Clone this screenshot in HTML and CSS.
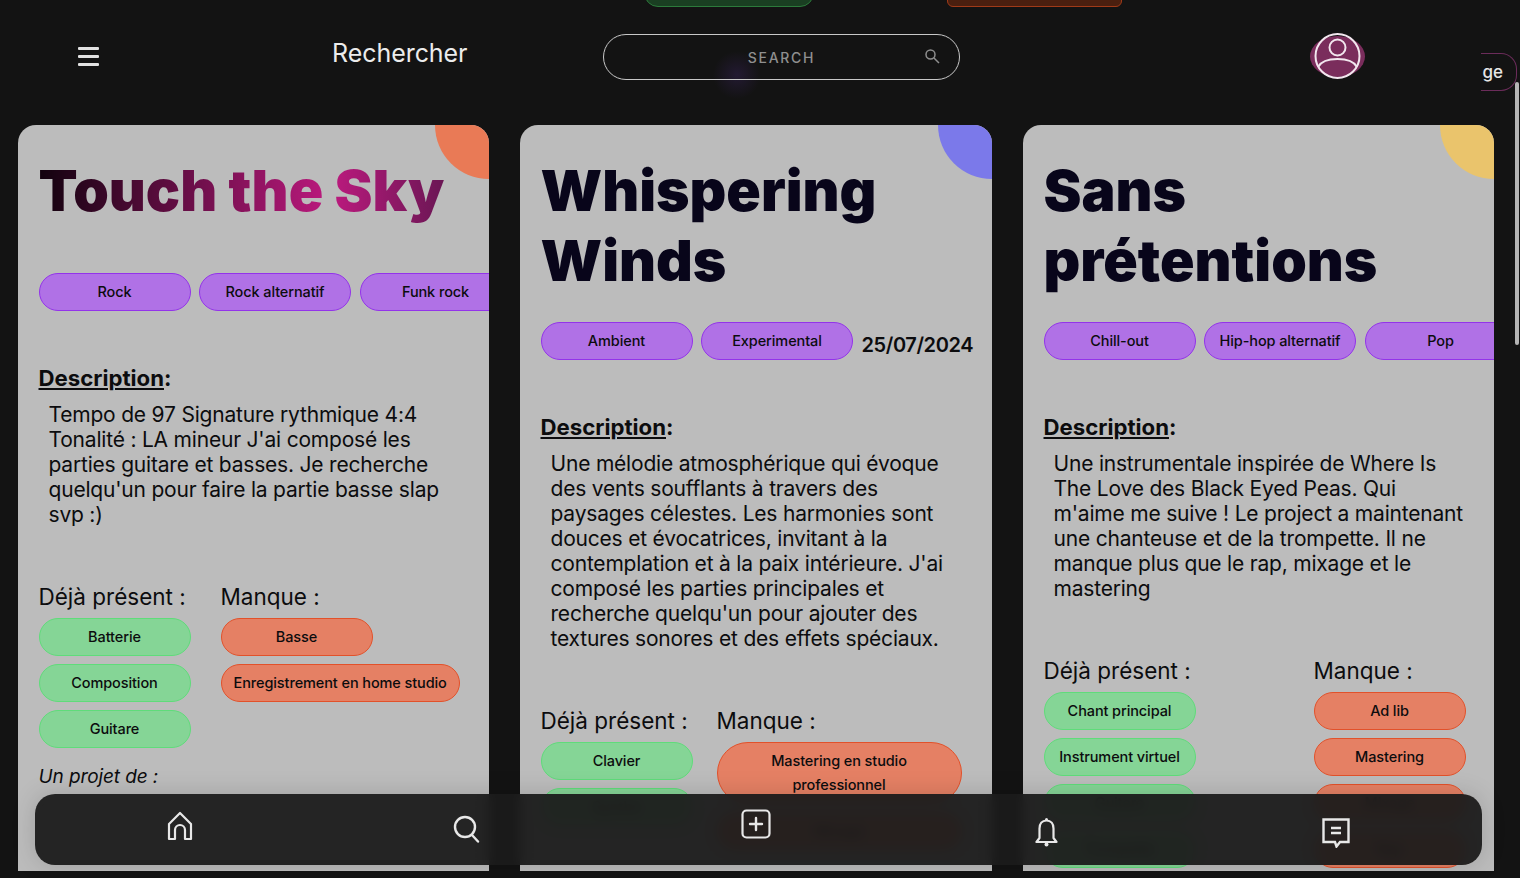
FILE: index.html
```html
<!DOCTYPE html>
<html lang="fr">
<head>
    <meta charset="UTF-8" />
    <title>Rechercher</title>
    <link rel="stylesheet" href="styles.css">
</head>
<body>
    <div class="ghost-top">
        <span class="ghost-pill green"></span>
        <span class="ghost-pill red"></span>
    </div>

    <header class="topbar">
        <div class="burger"><span></span><span></span><span></span></div>
        <div class="page-title">Rechercher</div>
        <div class="search">
            <span class="search-text">SEARCH</span>
            <svg class="search-icon" viewBox="0 0 16 16" width="16" height="16" fill="none" stroke="#8f8f8f" stroke-width="1.5">
                <circle cx="6.5" cy="6.5" r="4.5" />
                <path d="M10 10l5 5" />
            </svg>
        </div>
        <svg class="avatar" viewBox="0 0 56 46" width="56" height="46" fill="none" stroke="#f2e6ee" stroke-width="2">
            <ellipse cx="27.500" cy="23.500" rx="27.500" ry="20.500" fill="#7a2d5c" stroke="none" />
            <circle cx="27.500" cy="23" r="22" />
            <circle cx="27.500" cy="14.500" r="8" />
            <path d="M8 34c3-5.500 10.500-8 19.500-8s16.500 2.500 19.500 8" />
        </svg>
        <div class="badge-edge">ge</div>
    </header>

    <main class="cards">
        <article class="card orange">
            <h2 class="title gradient">Touch the Sky</h2>
            <div class="tags">
                <span class="tag">Rock</span>
                <span class="tag">Rock alternatif</span>
                <span class="tag">Funk rock</span>
            </div>
            <h3 class="desc-head"><u>Description</u>:</h3>
            <p class="desc">Tempo de 97 Signature rythmique 4:4 Tonalité : LA mineur J'ai composé les parties guitare et basses. Je recherche quelqu'un pour faire la partie basse slap svp :)</p>
            <div class="roles">
                <div class="col">
                    <h4>Déjà présent :</h4>
                    <span class="tag ok">Batterie</span>
                    <span class="tag ok">Composition</span>
                    <span class="tag ok">Guitare</span>
                </div>
                <div class="col">
                    <h4>Manque :</h4>
                    <span class="tag miss">Basse</span>
                    <span class="tag miss auto">Enregistrement en home studio</span>
                </div>
            </div>
            <p class="author">Un projet de :</p>
        </article>

        <article class="card violet">
            <h2 class="title">Whispering Winds</h2>
            <div class="tags">
                <span class="tag">Ambient</span>
                <span class="tag">Experimental</span>
                <span class="date">25/07/2024</span>
            </div>
            <h3 class="desc-head"><u>Description</u>:</h3>
            <p class="desc">Une mélodie atmosphérique qui évoque des vents soufflants à travers des paysages célestes. Les harmonies sont douces et évocatrices, invitant à la contemplation et à la paix intérieure. J'ai composé les parties principales et recherche quelqu'un pour ajouter des textures sonores et des effets spéciaux.</p>
            <div class="roles tight">
                <div class="col">
                    <h4>Déjà présent :</h4>
                    <span class="tag ok">Clavier</span>
                    <span class="tag ok">Synthé</span>
                </div>
                <div class="col">
                    <h4>Manque :</h4>
                    <span class="tag miss wide">Mastering en studio professionnel</span>
                    <span class="tag miss wide">Mixage</span>
                </div>
            </div>
        </article>

        <article class="card yellow">
            <h2 class="title">Sans prétentions</h2>
            <div class="tags">
                <span class="tag">Chill-out</span>
                <span class="tag">Hip-hop alternatif</span>
                <span class="tag">Pop</span>
            </div>
            <h3 class="desc-head"><u>Description</u>:</h3>
            <p class="desc">Une instrumentale inspirée de Where Is The Love des Black Eyed Peas. Qui m'aime me suive ! Le project a maintenant une chanteuse et de la trompette. Il ne manque plus que le rap, mixage et le mastering</p>
            <div class="roles spread">
                <div class="col">
                    <h4>Déjà présent :</h4>
                    <span class="tag ok">Chant principal</span>
                    <span class="tag ok">Instrument virtuel</span>
                    <span class="tag ok">Guitare</span>
                    <span class="tag ok">Trompette</span>
                </div>
                <div class="col">
                    <h4>Manque :</h4>
                    <span class="tag miss">Ad lib</span>
                    <span class="tag miss">Mastering</span>
                    <span class="tag miss">Mixage</span>
                    <span class="tag miss">Rap</span>
                </div>
            </div>
        </article>
    </main>

    <nav class="bottom-nav">
        <svg class="nav-home" viewBox="0 0 26 30" width="26" height="30" fill="none" stroke="#e8e8e8" stroke-width="2.200">
            <path d="M13 2L24 13V28H18V19a5 5 0 0 0-10 0V28H2V13z" stroke-linejoin="round" />
        </svg>
        <svg class="nav-search" viewBox="0 0 27 28" width="27" height="28" fill="none" stroke="#e8e8e8" stroke-width="2.400">
            <circle cx="12" cy="12" r="10" />
            <path d="M19 20l6 6.500" stroke-linecap="round" />
        </svg>
        <svg class="nav-add" viewBox="0 0 30 30" width="30" height="30" fill="none" stroke="#e8e8e8" stroke-width="2.200">
            <rect x="1.500" y="1.500" width="27" height="27" rx="4" />
            <path d="M15 9v12M9 15h12" stroke-width="2.400" stroke-linecap="round" />
        </svg>
        <svg class="nav-bell" viewBox="0 0 23 30" width="23" height="30" fill="#e8e8e8" stroke="#e8e8e8" stroke-width="2.200">
            <path d="M11.500 3.500c-4.500 0-7 3.500-7 8V21L1.500 25h20l-3-4V11.500c0-4.500-2.500-8-7-8z" fill="none" stroke-linejoin="round" />
            <circle cx="11.500" cy="2.500" r="1.500" stroke="none" />
            <circle cx="11.500" cy="27.500" r="2" stroke="none" />
        </svg>
        <svg class="nav-chat" viewBox="0 0 28 30" width="28" height="30" fill="none" stroke="#e8e8e8" stroke-width="2.400">
            <path d="M1.500 1.500H26.500V24H18L14.500 28.500 13 24H1.500z" />
            <path d="M9 10H19M9 15H19" />
        </svg>
    </nav>

    <div class="scroll-thumb"></div>
</body>
</html>
```

FILE: styles.css
```css
* {
    box-sizing: border-box;
}

html,
body {
    height: 100%;
    overflow: hidden;
}

body {
    margin: 0;
    background-color: #131313;
    color: #0c0c0e;
    font-family: Inter, "Liberation Sans", sans-serif;
}

/* pills of the section above, nearly scrolled out */
.ghost-top {
    position: absolute;
    top: -30px;
    left: 644px;
    display: flex;
    gap: 133px;
}

.ghost-pill {
    width: 170px;
    height: 37px;
    border-radius: 14px;
}

.ghost-pill.green {
    background-color: #1a3f22;
    border: 1px solid #2c7a3b;
}

.ghost-pill.red {
    width: 175px;
    border-radius: 6px;
    background-color: #4a1f0f;
    border: 1px solid #a03a18;
}

.topbar {
    height: 125px;
    display: flex;
    align-items: flex-start;
    position: relative;
    background: radial-gradient(circle 24px at 737px 75px, rgba(70, 40, 120, 0.3), transparent);
}

.burger {
    width: 21px;
    margin: 47px 0 0 78px;
    display: flex;
    flex-direction: column;
    gap: 5px;
}

.burger span {
    height: 3px;
    background-color: #e2e2e2;
    border-radius: 1px;
}

.page-title {
    margin: 37px 0 0 233px;
    width: 271px;
    color: #ececec;
    font-size: 25px;
    letter-spacing: -0.05px;
    line-height: 32px;
}

.search {
    width: 357px;
    height: 46px;
    margin-top: 34px;
    border: 1.500px solid #c8c8c8;
    border-radius: 23px;
    display: flex;
    align-items: center;
    justify-content: center;
    position: relative;
}

.search-text {
    color: #8f8f8f;
    font-size: 14px;
    font-weight: 500;
    letter-spacing: 1.700px;
}

.search-icon {
    position: absolute;
    right: 19px;
    top: 13px;
}

.avatar {
    margin: 33px 0 0 350px;
    flex: none;
    overflow: visible;
}

.badge-edge {
    position: absolute;
    top: 53px;
    right: 3px;
    width: 36px;
    height: 38px;
    padding-right: 13px;
    border: 1px solid #6b2c5a;
    border-left: none;
    border-radius: 0 16px 16px 0;
    display: flex;
    align-items: center;
    justify-content: flex-end;
    color: #e6e6e6;
    font-size: 17px;
    font-weight: 500;
}

.cards {
    display: grid;
    grid-template-columns: 471px 472px 471px;
    gap: 31px;
    padding-left: 18px;
}

.card {
    position: relative;
    height: 746px;
    padding: 31px 0 0 20.500px;
    background-color: #bcbcbc;
    border-radius: 18px 18px 0 0;
    overflow: hidden;
}

.card::after {
    content: "";
    position: absolute;
    top: -54px;
    right: -54px;
    width: 108px;
    height: 108px;
    border-radius: 50%;
}

.card.orange::after {
    background-color: #e97a56;
}

.card.violet::after {
    background-color: #7b79ea;
}

.card.yellow::after {
    background-color: #eac46c;
}

.title {
    margin: 0;
    min-height: 91px;
    padding-right: 60px;
    font-size: 57px;
    font-weight: 900;
    line-height: 70px;
    color: #08051a;
}

.title.gradient {
    background: linear-gradient(90deg, #12020e 0%, #bc1a7e 72%, #6a1654 100%);
    background-clip: text;
    -webkit-background-clip: text;
    color: transparent;
    width: fit-content;
    padding-right: 0;
}

.tags {
    display: flex;
    align-items: flex-start;
    gap: 8.500px;
    margin-top: 26px;
}

.tag {
    flex: none;
    display: flex;
    align-items: center;
    justify-content: center;
    width: 152px;
    min-height: 38px;
    padding: 0 8px;
    background-color: #b071e6;
    border: 1px solid #9333ea;
    border-radius: 19px;
    font-size: 14.500px;
    font-weight: 500;
    letter-spacing: -0.1px;
    line-height: 24px;
    text-align: center;
}

.date {
    padding-top: 10px;
    font-size: 20px;
    font-weight: 600;
    letter-spacing: -0.4px;
    line-height: 26px;
}

.desc-head {
    margin: 52px 0 0;
    font-size: 22.200px;
    font-weight: 700;
    line-height: 30px;
}

.desc {
    width: 415px;
    margin: 9px 0 0 10px;
    font-size: 21px;
    letter-spacing: -0.2px;
    line-height: 25px;
}

.roles {
    display: flex;
    gap: 30px;
    margin-top: 57px;
}

.roles.tight {
    gap: 24px;
}

.roles.spread {
    gap: 118px;
}

.col {
    display: flex;
    flex-direction: column;
    gap: 8px;
    align-items: flex-start;
}

.col h4 {
    margin: 0;
    font-size: 22.500px;
    font-weight: 400;
    line-height: 26px;
    white-space: nowrap;
}

.tag.ok {
    background-color: #85d596;
    border-color: #5fdc7a;
}

.tag.miss {
    background-color: #e58064;
    border-color: #e2512a;
}

.tag.auto {
    width: auto;
    padding: 0 12px;
}

.tag.wide {
    width: 245px;
    padding: 6px 30px;
    border-radius: 32px;
}

.author {
    margin: 17px 0 0;
    font-size: 19px;
    font-style: italic;
    letter-spacing: -0.1px;
}

.bottom-nav {
    position: fixed;
    left: 35px;
    top: 794px;
    width: 1447px;
    height: 71px;
    background-color: rgba(26, 26, 26, 0.945);
    backdrop-filter: blur(6px);
    border-radius: 20px;
    box-shadow: 0 0 24px rgba(0, 0, 0, 0.15);
}

.bottom-nav svg {
    position: absolute;
}

.nav-home {
    left: 132px;
    top: 17px;
}

.nav-search {
    left: 418px;
    top: 21px;
}

.nav-add {
    left: 706px;
    top: 15px;
}

.nav-bell {
    left: 1000px;
    top: 23px;
}

.nav-chat {
    left: 1287px;
    top: 24px;
}

.scroll-thumb {
    position: fixed;
    top: 82px;
    right: 1px;
    width: 4px;
    height: 263px;
    background-color: #b5b5b5;
    border-radius: 2px;
}
```
